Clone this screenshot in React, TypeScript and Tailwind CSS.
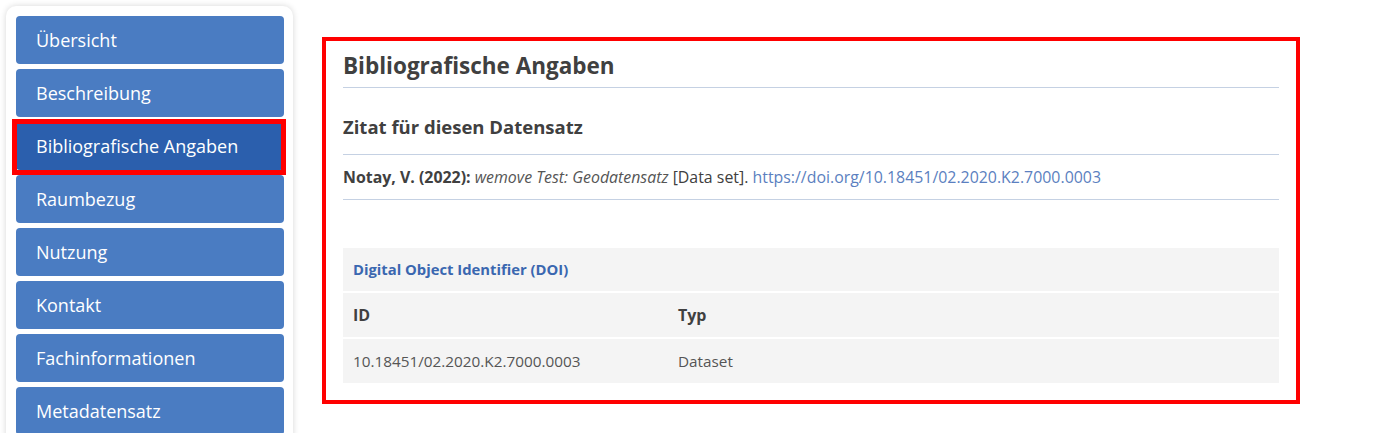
const navItems = [
  "Übersicht",
  "Beschreibung",
  "Bibliografische Angaben",
  "Raumbezug",
  "Nutzung",
  "Kontakt",
  "Fachinformationen",
  "Metadatensatz",
];

const App = () => {
  const active = "Bibliografische Angaben";
  return (
    <div
      className="flex items-start bg-white pl-[6px] pt-[6px] h-[433px] overflow-hidden"
      style={{ fontFamily: "'Open Sans', 'Noto Sans', sans-serif" }}
    >
      <div className="w-[287px] shrink-0 rounded-[10px] bg-white pl-[10px] pt-[10px] pb-[10px] shadow-[0_0_6px_rgba(0,0,0,0.16)] flex flex-col gap-[5px]">
        {navItems.map((item) => (
          <div key={item} className="relative w-[268px]">
            <button
              className={
                item === active
                  ? "w-full h-[48px] rounded-[4px] bg-[#2b5fad] text-left pl-[20px] text-[18px] text-white"
                  : "w-full h-[48px] rounded-[4px] bg-[#4a7cc2] text-left pl-[20px] text-[18px] text-white"
              }
            >
              {item}
            </button>
            {item === active && (
              <div className="absolute -left-[4px] -right-[2px] -top-[3px] -bottom-[5px] border-[5px] border-[#ff0000] pointer-events-none" />
            )}
          </div>
        ))}
      </div>

      <div className="ml-[29px] mt-[31px] w-[978px] border-4 border-[#ff0000] bg-white px-[17px] pt-[11px] pb-[17px] text-[#404040]">
        <h2 className="text-[22.5px] font-bold leading-[28px] pb-[7px] border-b border-[#c5d1e3]">
          Bibliografische Angaben
        </h2>
        <h3 className="mt-[27px] text-[18.5px] font-bold leading-[24px] pb-[15px] border-b border-[#c5d1e3]">
          Zitat für diesen Datensatz
        </h3>
        <p className="text-[15.9px] leading-[44px] border-b border-[#c5d1e3]">
          <span className="font-bold">Notay, V. (2022):</span>{" "}
          <span className="italic text-[#555]">wemove Test: Geodatensatz</span>{" "}
          [Data set].{" "}
          <a className="text-[#5b7fc0]" href="#">
            https://doi.org/10.18451/02.2020.K2.7000.0003
          </a>
        </p>

        <div className="mt-[48px] flex flex-col gap-[2px]">
          <div className="bg-[#f4f4f4] h-[43px] flex items-center px-[10px] font-bold text-[14.8px] text-[#3a67b0]">
            Digital Object Identifier (DOI)
          </div>
          <div className="bg-[#f4f4f4] h-[44px] grid grid-cols-[325px_1fr] items-center px-[10px] font-bold text-[16px]">
            <span>ID</span>
            <span>Typ</span>
          </div>
          <div className="bg-[#f4f4f4] h-[44px] grid grid-cols-[325px_1fr] items-center px-[10px] text-[15.3px] text-[#555]">
            <span>10.18451/02.2020.K2.7000.0003</span>
            <span>Dataset</span>
          </div>
        </div>
      </div>
    </div>
  );
};

export default App;
